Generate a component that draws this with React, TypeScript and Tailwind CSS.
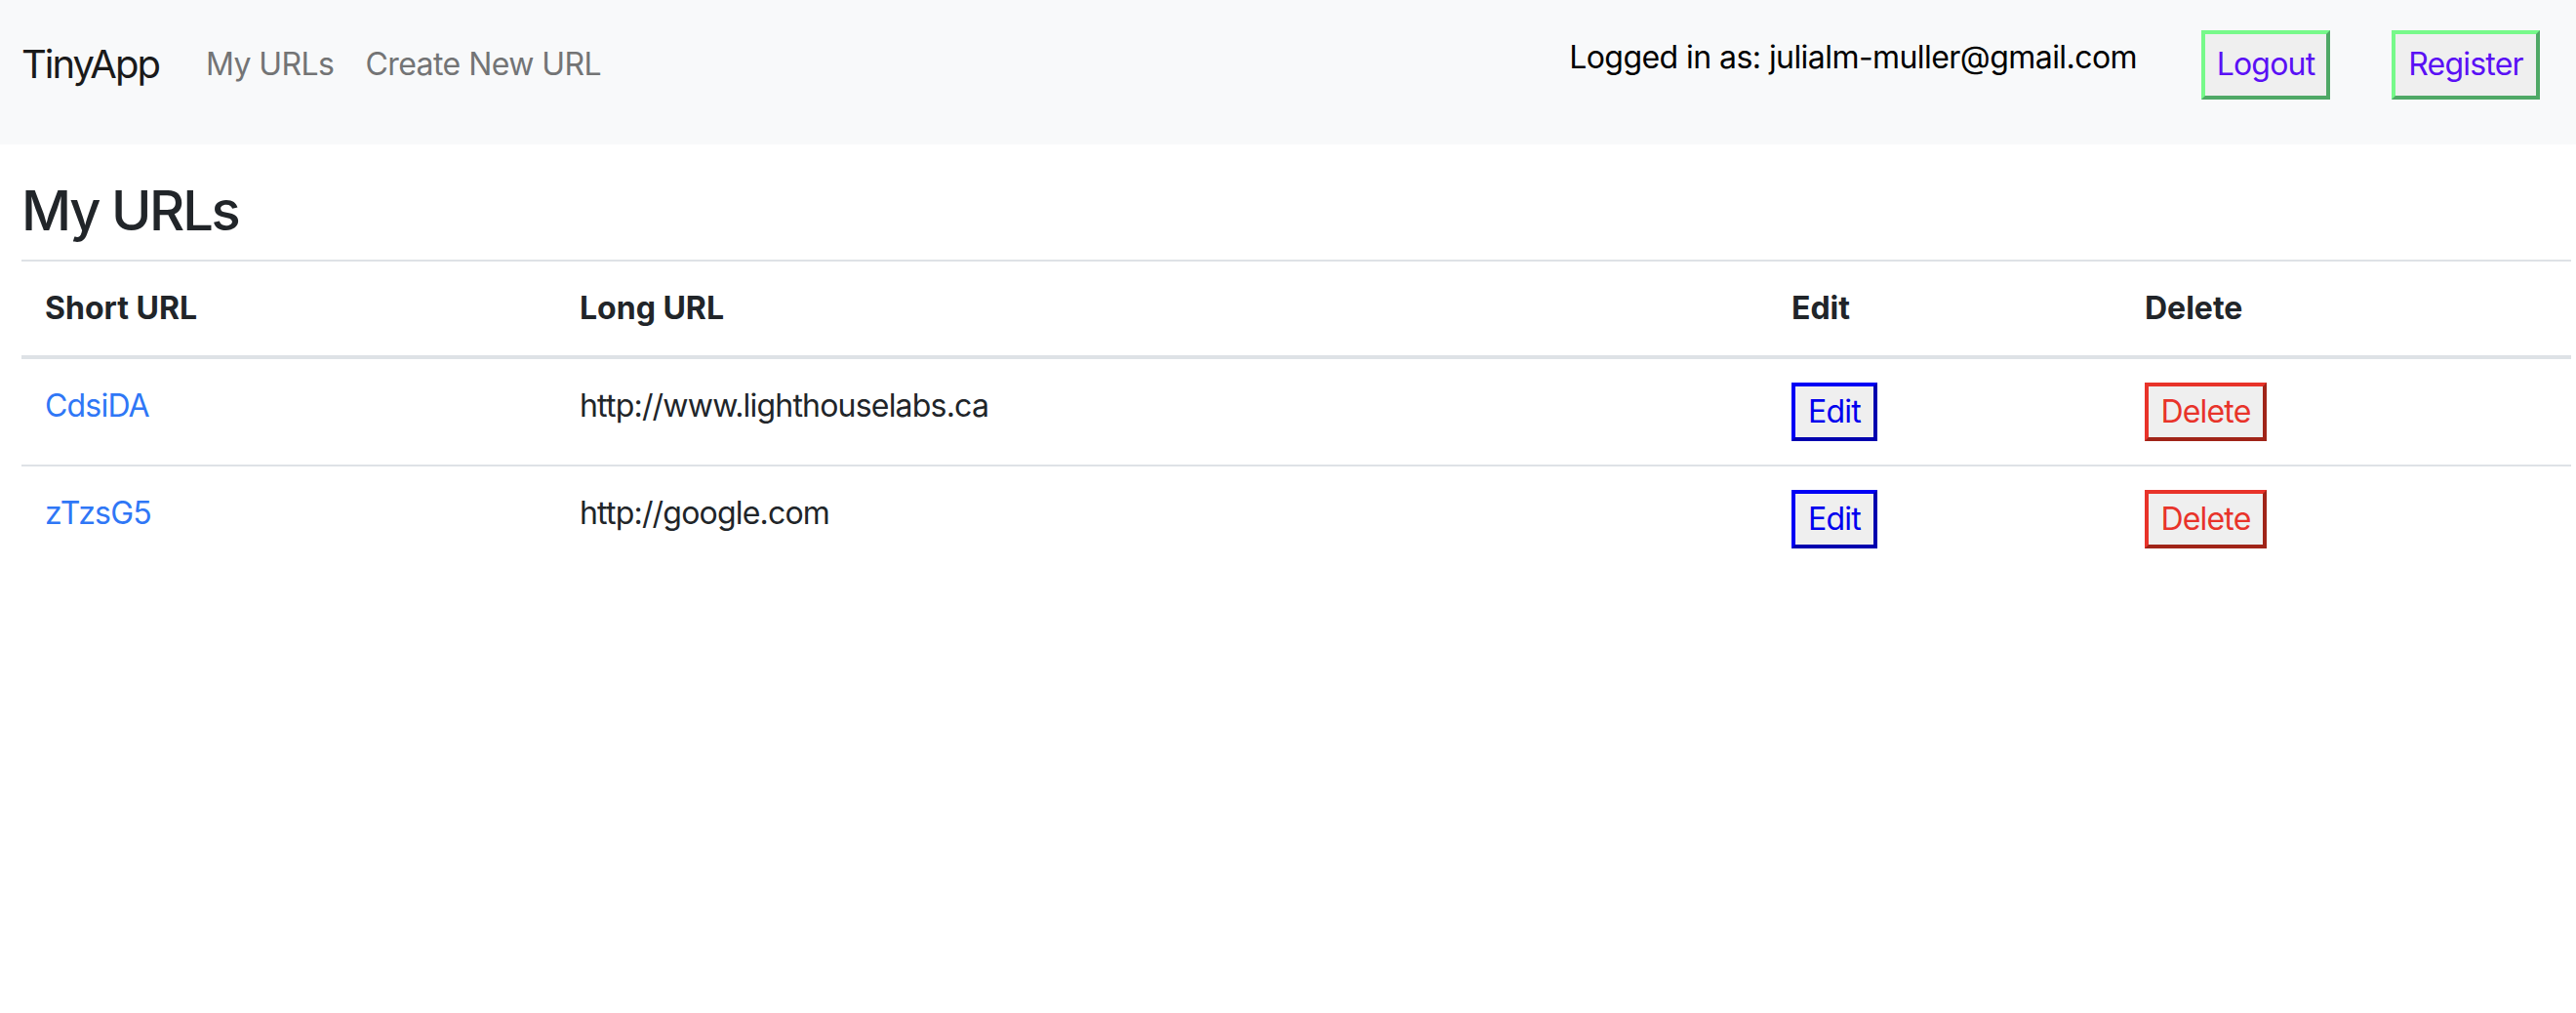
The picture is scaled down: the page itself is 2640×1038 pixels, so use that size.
const urls = [
  { short: "CdsiDA", long: "http://www.lighthouselabs.ca" },
  { short: "zTzsG5", long: "http://google.com" },
];

function NavBar() {
  return (
    <nav className="flex h-[148px] items-center bg-[#f8f9fa] pb-[16px] tracking-[-0.035em]">
      <a className="ml-[22px] mr-[32px] text-[40px] leading-[60px] tracking-[-0.05em] text-[#1a1a1a]">TinyApp</a>
      <a className="px-[16px] text-[32px] leading-[48px] text-[#737475]">My URLs</a>
      <a className="px-[16px] text-[32px] leading-[48px] text-[#737475]">Create New URL</a>

      <div className="ml-auto mr-[37px] flex items-center">
        <span className="mb-[15px] mr-[66px] text-[32px] leading-[48px] text-black">
          Logged in as: julialm-muller@gmail.com
        </span>
        <button className="flex h-[71px] w-[132px] items-center justify-center border-4 border-t-[#77f98a] border-l-[#77f98a] border-b-[#4fa866] border-r-[#4fa866] bg-[#efefef] text-[32px] tracking-[-0.025em] text-[#5a10f5]">
          Logout
        </button>
        <button className="ml-[63px] flex h-[71px] w-[152px] items-center justify-center border-4 border-t-[#77f98a] border-l-[#77f98a] border-b-[#4fa866] border-r-[#4fa866] bg-[#efefef] text-[32px] tracking-[-0.025em] text-[#5a10f5]">
          Register
        </button>
      </div>
    </nav>
  );
}

export default function App() {
  return (
    <main className="min-h-screen bg-white font-['Inter','Liberation_Sans',sans-serif] text-[#212529]">
      <NavBar />

      <section className="ml-[22px] mr-[5px]">
        <h2 className="mt-[35px] mb-[16px] text-[56px] font-medium leading-[67px] tracking-[-0.04em]">My URLs</h2>

        <table className="w-full table-fixed border-collapse border-t-2 border-[#dee2e6] text-[32px] leading-[48px]">
          <thead>
            <tr className="border-b-4 border-[#dee2e6] text-left">
              <th className="w-[548px] p-[24px] font-bold">Short URL</th>
              <th className="w-[1242px] p-[24px] font-bold">Long URL</th>
              <th className="w-[362px] p-[24px] font-bold">Edit</th>
              <th className="p-[24px] font-bold">Delete</th>
            </tr>
          </thead>
          <tbody className="tracking-[-0.025em]">
            {urls.map((u, i) => (
              <tr key={u.short} className={i > 0 ? "border-t-2 border-[#dee2e6]" : ""}>
                <td className="p-[24px] align-top">
                  <a className="text-[#2f77f6]">{u.short}</a>
                </td>
                <td className="p-[24px] align-top">{u.long}</td>
                <td className="p-[24px] align-top">
                  <button className="flex h-[60px] w-[88px] items-center justify-center border-4 border-t-[#0000f5] border-l-[#0000f5] border-b-[#0000ae] border-r-[#0000ae] bg-[#efefef] text-[32px] text-[#0000ee]">
                    Edit
                  </button>
                </td>
                <td className="p-[24px] align-top">
                  <button className="flex h-[60px] w-[125px] items-center justify-center border-4 border-t-[#e8332a] border-l-[#e8332a] border-b-[#a02418] border-r-[#a02418] bg-[#efefef] text-[32px] text-[#e8332a]">
                    Delete
                  </button>
                </td>
              </tr>
            ))}
          </tbody>
        </table>
      </section>
    </main>
  );
}
